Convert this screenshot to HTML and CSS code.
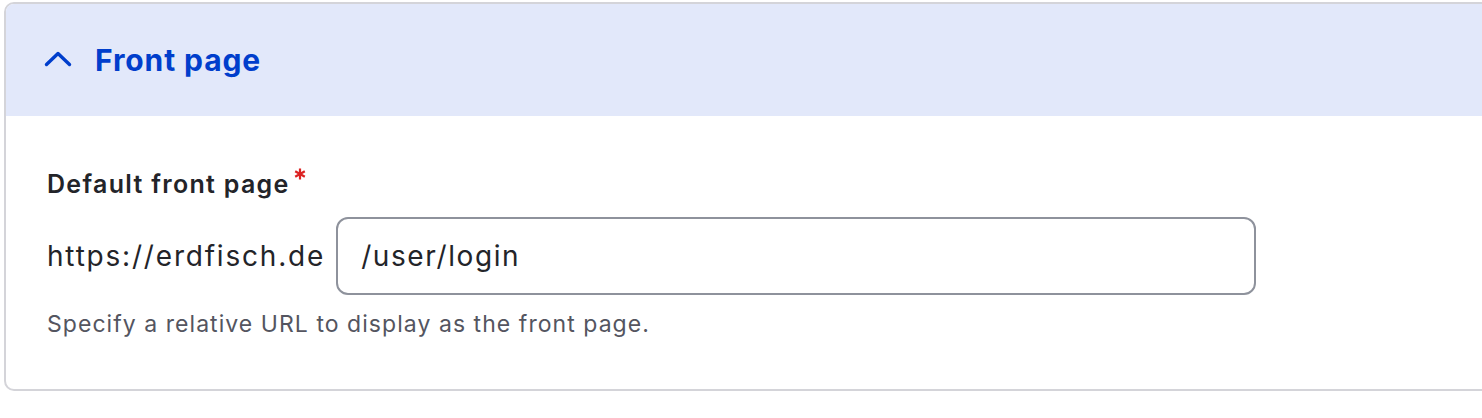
FILE: index.html
```html
<!DOCTYPE html>
<html lang="en">
<head>
<meta charset="utf-8">
<title>Front page</title>
<link rel="stylesheet" href="styles.css">
</head>
<body>
<details class="card" open>
  <summary class="summary">
    <svg class="chevron" width="28" height="16" viewBox="0 0 28 16" aria-hidden="true">
      <polyline points="2.5,13.5 14,2.5 25.5,13.5" fill="none" stroke="#003ecc" stroke-width="3.4" stroke-linecap="round" stroke-linejoin="round"/>
    </svg>
    <span class="summary-title">Front page</span>
  </summary>
  <div class="card-body">
    <label class="field-label" for="frontpage">Default front page<svg class="required" width="12" height="12" viewBox="0 0 12 12" role="img" aria-label="required"><g stroke="#dc2323" stroke-width="2.2" stroke-linecap="butt"><line x1="6" y1="0.5" x2="6" y2="11.5"/><line x1="1.2" y1="3.2" x2="10.8" y2="8.8"/><line x1="1.2" y1="8.8" x2="10.8" y2="3.2"/></g></svg></label>
    <div class="field-row">
      <span class="prefix">https://erdfisch.de</span>
      <input class="text-input" id="frontpage" type="text" value="/user/login">
    </div>
    <div class="description">Specify a relative URL to display as the front page.</div>
  </div>
</details>
</body>
</html>
```
FILE: styles.css
```css
html, body {
  margin: 0;
  padding: 0;
  background: #ffffff;
}

body {
  font-family: Inter, "Noto Sans", sans-serif;
  color: #232429;
  overflow: hidden;
}

.card {
  margin: 2px 0 0 4px;
  width: calc(100% + 20px);
  border: 2px solid #d4d4d9;
  border-radius: 10px;
  overflow: hidden;
  box-sizing: border-box;
}

.summary {
  list-style: none;
  display: flex;
  align-items: center;
  height: 112px;
  padding-left: 38px;
  background: #e2e8fa;
  color: #003ecc;
  cursor: pointer;
}

.summary::-webkit-details-marker {
  display: none;
}

.chevron {
  display: block;
  margin-right: 23px;
  margin-top: -2px;
}

.summary-title {
  font-size: 30px;
  font-weight: 700;
  line-height: 36px;
  letter-spacing: 0.9px;
}

.card-body {
  padding: 53px 0 50px 41px;
}

.field-label {
  display: block;
  font-size: 25px;
  font-weight: 600;
  line-height: 30px;
  letter-spacing: 1.3px;
  color: #232429;
}

.required {
  display: inline-block;
  margin-left: 4px;
  vertical-align: top;
  margin-top: -1px;
}

.field-row {
  display: flex;
  align-items: center;
  gap: 11px;
  margin-top: 18px;
}

.prefix {
  font-size: 28px;
  line-height: 36px;
  letter-spacing: 1.8px;
  color: #232429;
}

.text-input {
  box-sizing: border-box;
  width: 920px;
  height: 78px;
  border: 2px solid #8e929c;
  border-radius: 12px;
  padding: 0 0 0 23px;
  font-family: Inter, "Noto Sans", sans-serif;
  font-size: 28px;
  letter-spacing: 1.6px;
  color: #232429;
  background: #ffffff;
  outline: none;
}

.description {
  margin-top: 14px;
  font-size: 23px;
  line-height: 30px;
  letter-spacing: 1.05px;
  color: #545560;
}
```
